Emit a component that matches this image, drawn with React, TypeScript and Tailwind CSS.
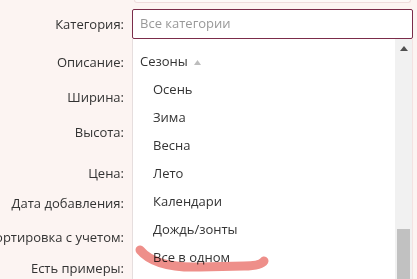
const labels = [
  { text: 'Категория:', mt: 'mt-[15px]' },
  { text: 'Описание:', mt: 'mt-[20px]' },
  { text: 'Ширина:', mt: 'mt-[17px]' },
  { text: 'Высота:', mt: 'mt-[17px]' },
  { text: 'Цена:', mt: 'mt-[23px]' },
  { text: 'Дата добавления:', mt: 'mt-[12px]' },
  { text: 'Сортировка с учетом:', mt: 'mt-[16px]' },
  { text: 'Есть примеры:', mt: 'mt-[13px]' },
]

const items = ['Осень', 'Зима', 'Весна', 'Лето', 'Календари', 'Дождь/зонты', 'Все в одном']

export default function App() {
  return (
    <div
      className="relative w-[417px] h-[279px] overflow-hidden bg-[#fcf4f2] text-[13px] text-[#333]"
      style={{ fontFamily: '"Open Sans", "Noto Sans", sans-serif' }}
    >
      <div className="flex">
        {/* labels */}
        <div className="w-[124px] shrink-0 flex flex-col items-end">
          {labels.map((l) => (
            <div key={l.text} className={`${l.mt} h-[18px] leading-[18px] whitespace-nowrap`}>
              {l.text}
            </div>
          ))}
        </div>

        {/* fields */}
        <div className="ml-[8px] w-[281px] flex flex-col">
          <div className="h-[3px] mx-[2px] rounded-b-[3px] border border-t-0 border-[#efdcdc] bg-[#fdf9f8]" />
          <div className="mt-[6px] h-[30px] rounded-[2px] border border-[#7b2c4a] bg-white px-[7px] flex items-center text-[#999] text-[13px]">
            Все категории
          </div>

          {/* open dropdown */}
          <div className="h-[240px] flex bg-white border-l border-[#e6dede] border-r border-r-[#f4e1e1]">
            <div className="flex-1 pt-[9px]">
              <div className="h-[28px] pl-[7px] flex items-center gap-[6px]">
                <span>Сезоны</span>
                <svg width="7" height="5" viewBox="0 0 7 5" className="mt-[1px]">
                  <path d="M0 5 L3.5 0 L7 5 Z" fill="#bdbdbd" />
                </svg>
              </div>
              {items.map((it) => (
                <div key={it} className="h-[28px] pl-[20px] flex items-center">
                  {it}
                </div>
              ))}
            </div>
            <div className="w-[17px] bg-[#f1f1f1] flex flex-col items-center">
              <svg width="8" height="5" viewBox="0 0 8 5" className="mt-[7px]">
                <path d="M0 5 L4 0 L8 5 Z" fill="#505050" />
              </svg>
              <div className="mt-auto mb-0 w-[13px] h-[50px] bg-[#c1c1c1]" />
            </div>
          </div>
        </div>
      </div>

      {/* hand-drawn highlight */}
      <svg className="absolute left-0 top-0 pointer-events-none mix-blend-multiply" width="417" height="279">
        <path
          d="M140 250 C 150 262, 168 268, 200 267 L 244 266 C 256 266, 262 264, 264 261"
          fill="none"
          stroke="#ee8f8a"
          strokeWidth="9"
          strokeLinecap="round"
        />
      </svg>
    </div>
  )
}
